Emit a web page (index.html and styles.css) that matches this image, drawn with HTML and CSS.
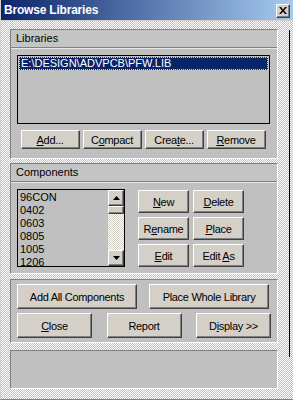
FILE: index.html
```html
<!DOCTYPE html>
<html lang="en">
<head>
  <meta charset="UTF-8">
  <title>Browse Libraries</title>
  <link rel="stylesheet" href="styles.css">
</head>
<body>
  <div class="window">
    <!-- title bar -->
    <div class="titlebar">
      <span class="title">Browse Libraries</span>
      <div class="close-btn">
        <svg width="8" height="7" viewBox="0 0 8 7">
          <path d="M0 0h2l2 2.5L6 0h2L5 3.5 8 7H6L4 4.5 2 7H0l3-3.5z" fill="#000"/>
        </svg>
      </div>
    </div>

    <div class="client">
      <!-- libraries -->
      <div class="panel libs">
        <div class="panel-head">Libraries</div>
        <div class="panel-body">
          <div class="listbox lib-list">
            <div class="item selected">E:\DESIGN\ADVPCB\PFW.LIB</div>
          </div>
          <div class="lib-buttons">
            <div class="btn"><span><u>A</u>dd...</span></div>
            <div class="btn"><span>C<u>o</u>mpact</span></div>
            <div class="btn"><span>Crea<u>t</u>e...</span></div>
            <div class="btn"><span><u>R</u>emove</span></div>
          </div>
        </div>
      </div>

      <!-- components -->
      <div class="panel comps">
        <div class="panel-head">Components</div>
        <div class="panel-body comp-body">
          <div class="listbox comp-list">
            <div class="items">
              <div class="item">96CON</div>
              <div class="item">0402</div>
              <div class="item">0603</div>
              <div class="item">0805</div>
              <div class="item">1005</div>
              <div class="item">1206</div>
            </div>
            <div class="scrollbar">
              <div class="sb-btn">
                <svg width="7" height="4" viewBox="0 0 7 4"><path d="M3.5 0L7 4H0z" fill="#000"/></svg>
              </div>
              <div class="sb-thumb"></div>
              <div class="sb-track"></div>
              <div class="sb-btn">
                <svg width="7" height="4" viewBox="0 0 7 4"><path d="M0 0h7L3.5 4z" fill="#000"/></svg>
              </div>
            </div>
          </div>
          <div class="comp-buttons">
            <div class="btn"><span><u>N</u>ew</span></div>
            <div class="btn"><span><u>D</u>elete</span></div>
            <div class="btn"><span>R<u>e</u>name</span></div>
            <div class="btn"><span><u>P</u>lace</span></div>
            <div class="btn"><span><u>E</u>dit</span></div>
            <div class="btn"><span>Edit <u>A</u>s</span></div>
          </div>
        </div>
      </div>

      <!-- actions -->
      <div class="panel actions">
        <div class="row wide">
          <div class="btn"><span>Add All Components</span></div>
          <div class="btn"><span>Place Whole Library</span></div>
        </div>
        <div class="row">
          <div class="btn"><span><u>C</u>lose</span></div>
          <div class="btn"><span>Report</span></div>
          <div class="btn"><span>D<u>i</u>splay &gt;&gt;</span></div>
        </div>
      </div>

      <!-- status -->
      <div class="panel status"></div>
    </div>

    <div class="edge-line"></div>
  </div>
</body>
</html>
```

FILE: styles.css
```css
/* base */
html, body {
  margin: 0;
  padding: 0;
}
body {
  width: 293px;
  height: 400px;
  overflow: hidden;
  font-family: "Liberation Sans", Arial, sans-serif;
  font-size: 11px;
  color: #000;
}
.window {
  position: relative;
  width: 293px;
  height: 400px;
  box-sizing: border-box;
  border-left: 1px solid #d4d0c8;
  border-bottom: 1px solid #808080;
  background: repeating-conic-gradient(#ffffff 0 25%, #c0c0c0 0 50%) 0 0 / 2px 2px;
  display: flex;
  flex-direction: column;
}

/* title bar */
.titlebar {
  height: 20px;
  flex: none;
  display: flex;
  align-items: center;
  justify-content: space-between;
  padding: 0 3px 0 3px;
  background: linear-gradient(to right, #0a246a, #a6caf0);
  border-bottom: 1px solid #d4d0c8;
}
.title {
  color: #fff;
  font-weight: bold;
  font-size: 12px;
  letter-spacing: -0.2px;
  margin-top: -1px;
}
.close-btn {
  width: 14px;
  height: 14px;
  box-sizing: border-box;
  background: #d4d0c8;
  border: 1px solid;
  border-color: #fff #404040 #404040 #fff;
  box-shadow: inset -1px -1px #808080;
  display: flex;
  align-items: center;
  justify-content: center;
  margin-top: 1px;
}

/* client area */
.client {
  flex: 1;
  display: flex;
  flex-direction: column;
  padding: 8px 15px 8px 9px;
}
.panel {
  background: #c0c0c0;
  border: 1px solid;
  border-color: #808080 #fff #fff #808080;
}
.panel-head {
  height: 17px;
  line-height: 16px;
  padding-left: 5px;
  background: #c4c4c4;
  border-bottom: 1px solid #808080;
  box-shadow: 0 1px #e8e8e8;
}

/* libraries */
.libs .panel-body {
  padding: 7px 7px 9px 6px;
}
.listbox {
  background: #c0c0c0;
  border: 1px solid #000;
}
.lib-list {
  height: 65px;
  padding: 1px;
}
.item {
  height: 13px;
  line-height: 13px;
  padding-left: 2px;
  white-space: nowrap;
}
.item.selected {
  background: #0a246a;
  color: #fff;
  outline: 1px dotted #f0e080;
  outline-offset: -1px;
}
.lib-buttons {
  display: flex;
  justify-content: center;
  gap: 3px;
  margin-top: 6px;
  padding-right: 1px;
}
.lib-buttons .btn {
  width: 59px;
  height: 19px;
}

/* buttons */
.btn {
  box-sizing: border-box;
  display: flex;
  align-items: center;
  justify-content: center;
  background: #d4d0c8;
  border: 1px solid;
  border-color: #fff #404040 #404040 #fff;
  box-shadow: inset -1px -1px #808080;
  white-space: nowrap;
  letter-spacing: -0.3px;
}
.btn u {
  text-decoration-thickness: 1px;
  text-underline-offset: 1px;
}

/* components */
.comps {
  margin-top: 4px;
}
.comp-body {
  display: flex;
  padding: 7px 7px 6px 6px;
}
.comp-list {
  width: 106px;
  height: 76px;
  display: flex;
}
.items {
  flex: 1;
  padding-top: 1px;
}
.comp-list .item {
  padding-left: 2px;
}
.scrollbar {
  width: 16px;
  display: flex;
  flex-direction: column;
}
.sb-btn, .sb-thumb {
  box-sizing: border-box;
  background: #d4d0c8;
  border: 1px solid;
  border-color: #fff #404040 #404040 #fff;
  box-shadow: inset -1px -1px #808080;
}
.sb-btn {
  height: 16px;
  display: flex;
  align-items: center;
  justify-content: center;
}
.sb-thumb {
  height: 8px;
}
.sb-track {
  flex: 1;
  background: repeating-conic-gradient(#ffffff 0 25%, #d4d0c8 0 50%) 0 0 / 2px 2px;
}
.comp-buttons {
  margin-left: 13px;
  margin-top: 1px;
  display: grid;
  grid-template-columns: 51px 51px;
  grid-auto-rows: 23px;
  column-gap: 4px;
  row-gap: 4px;
  align-content: start;
}

/* actions */
.actions {
  margin-top: 5px;
  padding: 4px 6px 4px 6px;
  display: flex;
  flex-direction: column;
  gap: 4px;
}
.row {
  display: flex;
  justify-content: space-between;
}
.row .btn {
  width: 75px;
  height: 25px;
}
.row.wide {
  padding-right: 2px;
}
.row.wide .btn {
  width: 120px;
}

/* status */
.status {
  margin-top: 7px;
  height: 37px;
}

.edge-line {
  position: absolute;
  left: 288px;
  top: 30px;
  width: 1px;
  height: 327px;
  background: #000;
}
```
